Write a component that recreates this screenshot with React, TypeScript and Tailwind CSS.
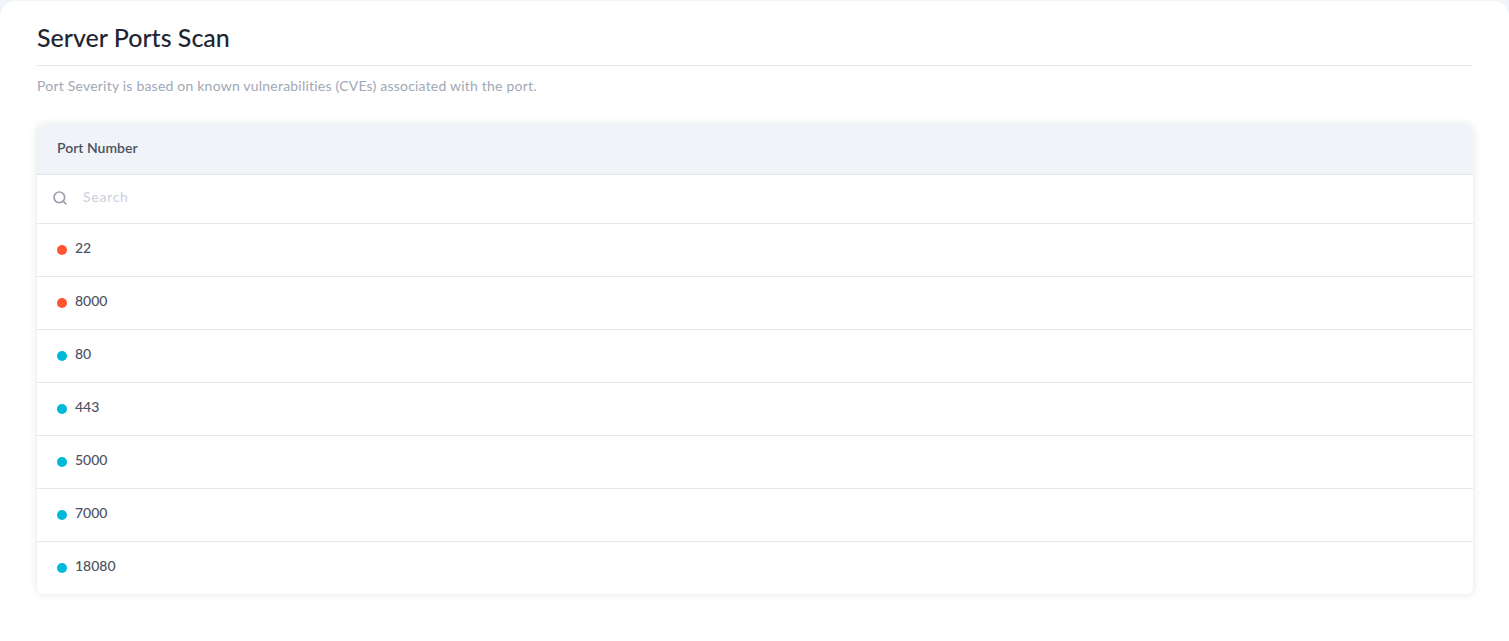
import { Search } from "lucide-react";

const ports = [
  { port: "22", color: "bg-[#ff5630]" },
  { port: "8000", color: "bg-[#ff5630]" },
  { port: "80", color: "bg-[#00b8d9]" },
  { port: "443", color: "bg-[#00b8d9]" },
  { port: "5000", color: "bg-[#00b8d9]" },
  { port: "7000", color: "bg-[#00b8d9]" },
  { port: "18080", color: "bg-[#00b8d9]" },
];

export default function App() {
  return (
    <div className="min-h-[641px] bg-[#f1f4f8] pt-px font-['Lato',sans-serif]">
      <div className="h-[640px] rounded-t-2xl bg-white pt-[20px] pr-[36px] pl-[37px]">
        <h1 className="h-[44px] text-[25px] leading-[33px] font-medium text-[#1f2533]">Server Ports Scan</h1>
        <div className="border-t border-[#e5e7eb] pt-[11px]">
          <p className="text-[14px] leading-[17px] tracking-[0.21px] text-[#a1a7b5]">
            Port Severity is based on known vulnerabilities (CVEs) associated with the port.
          </p>
        </div>
        <div className="mt-[31px] overflow-hidden rounded-md bg-white shadow-[0_0_8px_rgba(30,40,70,0.12)]">
          <div className="flex h-[50px] items-center border-b border-[#e5e7eb] bg-[#f0f3f8] px-5 pb-[5px] text-[14px] font-semibold text-[#4b5262]">
            Port Number
          </div>
          <div className="flex h-[49px] items-center border-b border-[#e5e7eb] pl-[15px]">
            <Search size={16} className="mb-[3px] text-[#9aa0ae]" strokeWidth={2.5} />
            <span className="ml-[15px] pb-[5px] text-[14px] font-medium tracking-[0.7px] text-[#ced3df]">Search</span>
          </div>
          {ports.map((p, i) => (
            <div
              key={p.port}
              className={`flex items-center pl-5 ${i < ports.length - 1 ? "h-[53px] border-b border-[#e5e7eb]" : "h-[52px]"}`}
            >
              <span className={`h-[10px] w-[10px] rounded-full ${p.color}`} />
              <span className="ml-2 pb-[5px] text-[14px] font-medium text-[#4b5262]">{p.port}</span>
            </div>
          ))}
        </div>
      </div>
    </div>
  );
}
